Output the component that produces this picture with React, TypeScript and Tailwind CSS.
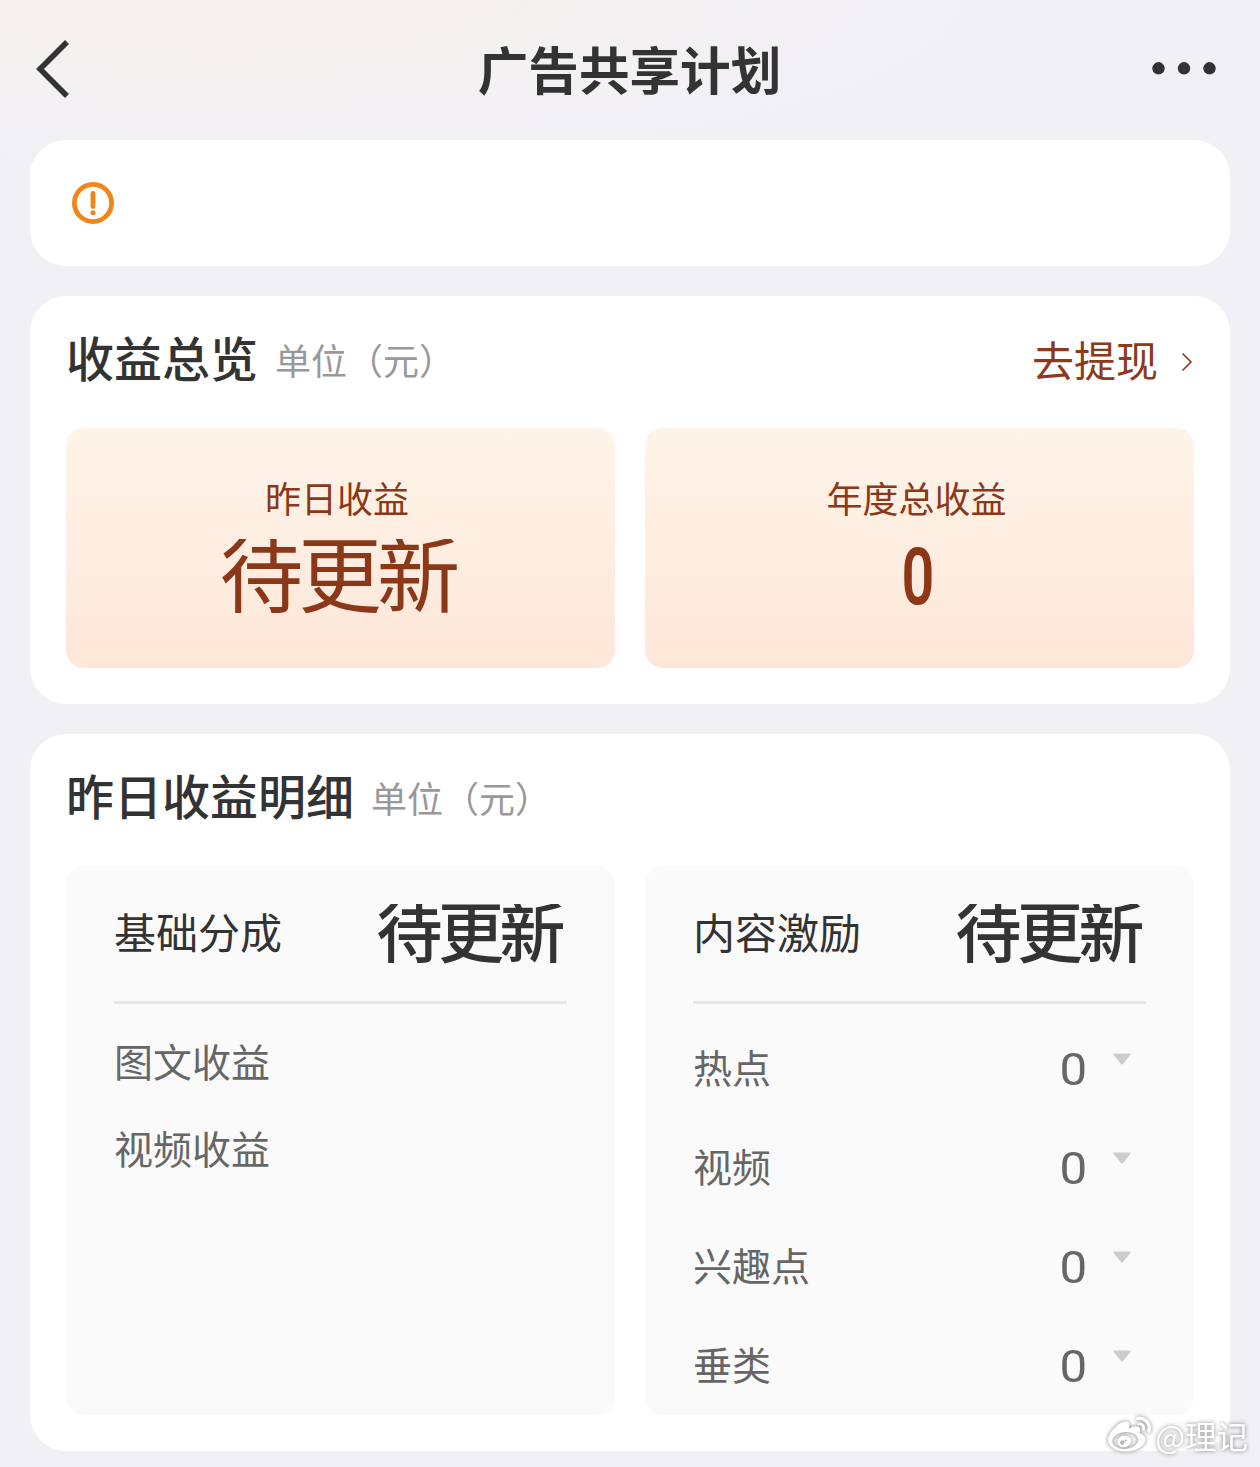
import { FaWeibo } from 'react-icons/fa';

interface IncentiveItem {
  label: string;
  value: number;
}

const baseItems = ['图文收益', '视频收益'];

const incentiveItems: IncentiveItem[] = [
  { label: '热点', value: 0 },
  { label: '视频', value: 0 },
  { label: '兴趣点', value: 0 },
  { label: '垂类', value: 0 },
];

function SectionTitle({ title }: { title: string }) {
  return (
    <div className="flex h-[60px] items-start">
      <h2 className="text-[48px] leading-[56px] font-medium text-[#333]">{title}</h2>
      <span className="ml-[17px] pt-[1px] text-[36px] leading-[60px] text-[#999]">单位（元）</span>
    </div>
  );
}

function DetailHead({ label }: { label: string }) {
  return (
    <div className="flex h-[138px] items-center justify-between border-b-[3px] border-[#e6e6e6]">
      <span className="pb-[5px] text-[42px] leading-[60px] text-[#333]">{label}</span>
      {/* line box is shorter than the glyphs, so their tops get cut */}
      <span className="mt-[5px] h-[64px] overflow-hidden pr-[6px] text-[66px] leading-[48px] font-medium tracking-[-4.5px] text-[#333]">
        待更新
      </span>
    </div>
  );
}

export default function App() {
  return (
    <div className="relative h-[1467px] w-[1260px] overflow-hidden bg-[#f1f0f5] bg-[radial-gradient(ellipse_760px_165px_at_220px_0px,#f7efec_0%,#f6f0ee_22%,#f3f1f0_40%,#f3f1f3_65%,#f1f0f5_100%)] bg-no-repeat font-['Noto_Sans_CJK_SC',sans-serif]">
      <header className="flex h-[140px] items-center justify-between pr-[43px] pb-[2px] pl-[36px]">
        <svg width="66" height="58" viewBox="0 0 66 58" fill="none" stroke="#333" strokeWidth="5.6">
          <path d="M31 2 L4 29 L31 56" />
        </svg>
        <h1 className="pb-[3px] pl-[6px] text-[50.6px] leading-[70px] font-bold text-[#333]">广告共享计划</h1>
        <svg width="66" height="14" viewBox="0 0 66 14" fill="#333">
          <circle cx="7.5" cy="6.3" r="6.2" />
          <circle cx="33" cy="6.3" r="6.2" />
          <circle cx="58.5" cy="6.3" r="6.2" />
        </svg>
      </header>

      <main className="flex flex-col gap-[30px] px-[30px]">
        <section className="flex h-[126px] items-center rounded-[36px] bg-white px-[42px]">
          <svg width="42" height="42" viewBox="0 0 42 42" fill="none" stroke="#f08519">
            <circle cx="21" cy="21" r="18.6" strokeWidth="4.8" />
            <path d="M21 11.5 V24.5" strokeWidth="4.8" strokeLinecap="round" />
            <circle cx="21" cy="30.7" r="2.5" fill="#f08519" stroke="none" />
          </svg>
        </section>

        <section className="h-[408px] rounded-[36px] bg-white px-[36px] pt-[32px]">
          <div className="flex h-[60px] items-center justify-between">
            <SectionTitle title="收益总览" />
            <a className="flex items-center pt-[2px] text-[42px] leading-[60px] text-[#8b3a1c]">
              去提现
              <svg className="mt-[6px] mr-[1px] ml-[23px]" width="12" height="20" viewBox="0 0 12 20" fill="none" stroke="#8b3a1c" strokeWidth="1.6">
                <path d="M1.5 1.5 L10 10 L1.5 18.5" />
              </svg>
            </a>
          </div>
          <div className="mt-[40px] grid grid-cols-2 gap-[30px] text-[#8b3819]">
            <div className="flex h-[240px] flex-col items-center rounded-[18px] bg-linear-to-b from-[#fff4e9] to-[#fde7d9] pt-[43px] pr-[7px]">
              <span className="text-[36px] leading-[52px]">昨日收益</span>
              <span className="mt-[16px] ml-[3px] h-[80px] overflow-hidden pr-[2px] text-[83.5px] leading-[62px] tracking-[-5px]">待更新</span>
            </div>
            <div className="flex h-[240px] flex-col items-center rounded-[18px] bg-linear-to-b from-[#fff4e9] to-[#fde7d9] pt-[43px] pr-[6px]">
              <span className="text-[36px] leading-[52px]">年度总收益</span>
              <span className="mt-[16px] ml-[3px] scale-x-72 font-[Roboto,sans-serif] text-[80px] leading-[76px] font-semibold">0</span>
            </div>
          </div>
        </section>

        <section className="h-[717px] rounded-[36px] bg-white px-[36px] pt-[32px]">
          <SectionTitle title="昨日收益明细" />
          <div className="mt-[40px] grid grid-cols-2 gap-[30px]">
            <div className="h-[549px] rounded-[18px] bg-[#fafafa] px-[48px]">
              <DetailHead label="基础分成" />
              <ul className="flex flex-col gap-[27px] pt-[26px]">
                {baseItems.map((item) => (
                  <li key={item} className="text-[39px] leading-[60px] text-[#666]">
                    {item}
                  </li>
                ))}
              </ul>
            </div>
            <div className="h-[549px] rounded-[18px] bg-[#fafafa] px-[48px]">
              <DetailHead label="内容激励" />
              <ul className="flex flex-col gap-[39px] pt-[34px]">
                {incentiveItems.map((item) => (
                  <li key={item.label} className="flex h-[60px] items-center text-[#666]">
                    <span className="flex-1 pb-[5px] text-[39px] leading-[60px]">{item.label}</span>
                    <span className="scale-x-112 pt-[4px] font-[Roboto,sans-serif] text-[44px] leading-[60px]">{item.value}</span>
                    <svg className="mr-[15px] mb-[19px] ml-[27px]" width="18" height="12" viewBox="0 0 18 12" fill="#ccc">
                      <path d="M1 0.5 H17 Q18.2 0.7 17.3 1.9 L10 11 Q9 12 8 11 L0.7 1.9 Q-0.2 0.7 1 0.5 Z" />
                    </svg>
                  </li>
                ))}
              </ul>
            </div>
          </div>
        </section>
      </main>

      {/* watermark */}
      <div className="absolute right-[12px] bottom-[10px] flex items-center gap-[4px] text-white drop-shadow-[0_0_2px_rgba(0,0,0,0.5)]">
        <FaWeibo className="mt-[2px] size-[43px]" />
        <span className="text-[31.5px] leading-[40px]">@理记</span>
      </div>
    </div>
  );
}
